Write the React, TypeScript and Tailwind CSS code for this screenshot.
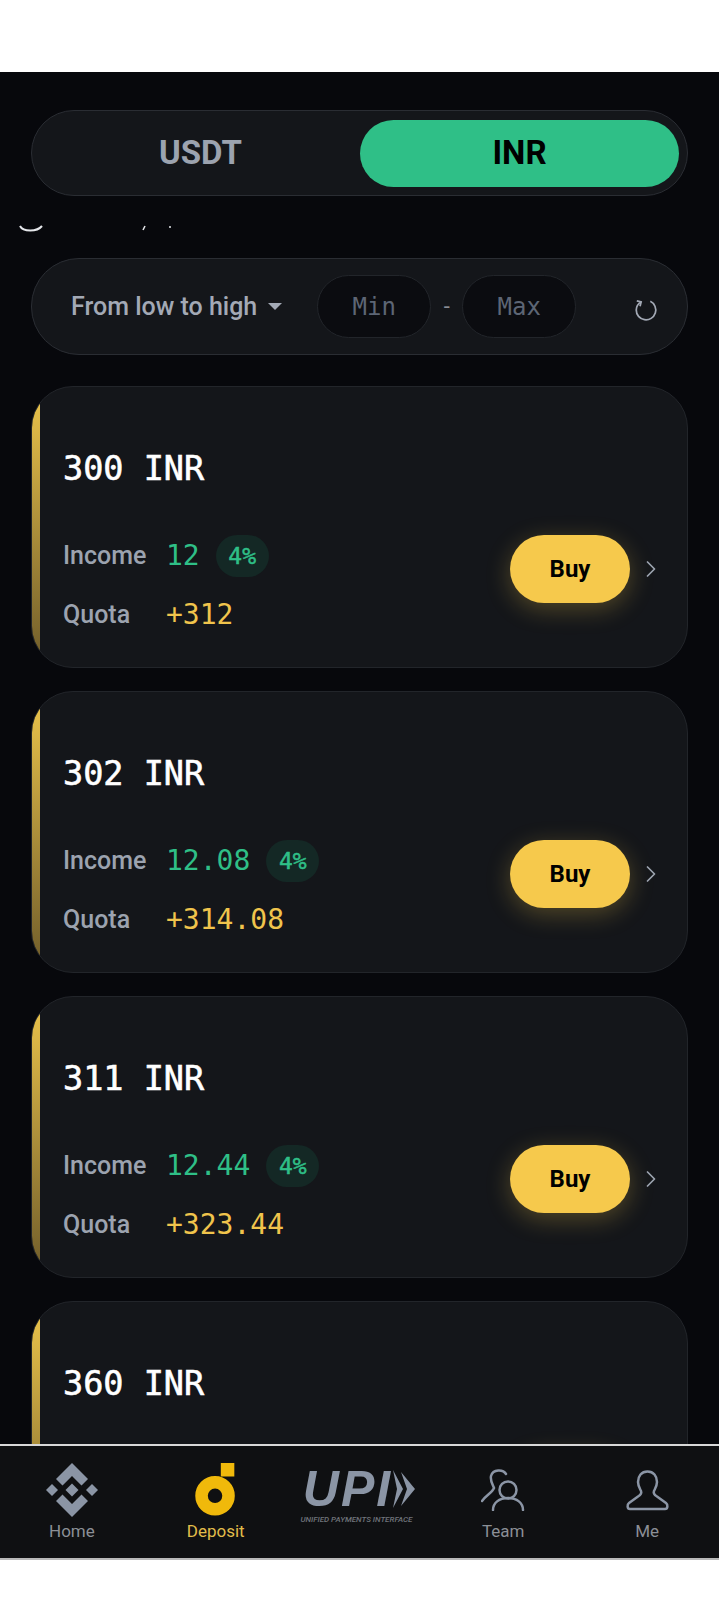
import { ChevronRight } from "lucide-react";

const sans = "font-['Roboto','Liberation_Sans',sans-serif]";
const mono = "font-['DejaVu_Sans_Mono','Liberation_Mono',monospace]";

const offers = [
  { amount: "300", income: "12", quota: "+312" },
  { amount: "302", income: "12.08", quota: "+314.08" },
  { amount: "311", income: "12.44", quota: "+323.44" },
  { amount: "360", income: "14.4", quota: "+374.4" },
];

function OfferCard({ amount, income, quota }: { amount: string; income: string; quota: string }) {
  return (
    <div className="relative h-[282px] shrink-0 overflow-hidden rounded-[42px] border border-[#22252a] bg-[#14161a] pl-[31px] pr-[22px]">
      <div className="absolute bottom-0 left-0 top-0 w-2 bg-gradient-to-b from-[#eec64b] to-[#6f5c2a]" />
      <div className={`${mono} mt-[57px] text-[33.500px] leading-[50px] text-white [-webkit-text-stroke:0.6px_white]`}>{amount} INR</div>
      <div className="mt-[40px] flex items-center justify-between">
        <div>
          <div className="flex h-[44px] items-center">
            <span className={`${sans} w-[103px] text-[25px] font-medium text-[#9ca3af]`}>Income</span>
            <span className={`${mono} text-[28px] text-[#2fbf87]`}>{income}</span>
            <span className={`${mono} ml-4 flex h-[42px] w-[53px] items-center justify-center rounded-full bg-[#142825] text-[23px] text-[#2fbf87] [-webkit-text-stroke:0.5px_#2fbf87]`}>4%</span>
          </div>
          <div className="mt-[15px] flex h-[44px] items-center">
            <span className={`${sans} w-[103px] text-[25px] font-medium text-[#9ca3af]`}>Quota</span>
            <span className={`${mono} text-[28px] text-[#f0c44c]`}>{quota}</span>
          </div>
        </div>
        <div className="mb-[33px] flex items-center gap-[7px]">
          <button className={`${sans} flex h-[68px] w-[120px] items-center justify-center rounded-[34px] bg-[#f6c94c] text-[24px] font-bold text-black shadow-[0_6px_24px_rgba(246,201,76,0.28)]`}>Buy</button>
          <ChevronRight className="h-7 w-7 text-[#9ca3af]" strokeWidth={1.500} />
        </div>
      </div>
    </div>
  );
}

function NavItem({ label, active, children }: { label: string; active?: boolean; children: React.ReactNode }) {
  return (
    <div className="flex w-[144px] flex-col items-center">
      <div className="flex h-[58px] items-center justify-center">{children}</div>
      <span className={`${sans} mt-[1px] text-[17px] leading-[22px] ${active ? "text-[#e2bd4a]" : "text-[#8b8f96]"}`}>{label}</span>
    </div>
  );
}

export default function App() {
  return (
    <div className={`${sans} h-[1600px] w-[719px] overflow-hidden bg-white`}>
      <div className="h-[72px]" />
      <div className="flex h-[1488px] flex-col border-b-2 border-[#b9b9b9] bg-[#07080c]">
        <div className="relative min-h-0 flex-1 overflow-hidden px-[31px]">
          <div className="mt-[38px] flex h-[86px] items-center rounded-[43px] border border-[#2a2d33] bg-[#14161a] pl-[9px] pr-[8px]">
            <div className="flex h-[67px] flex-1 items-center justify-center text-[33px] font-bold text-[#9ca3af]">USDT</div>
            <div className="flex h-[67px] w-[319px] items-center justify-center rounded-[34px] bg-[#2fbf87] text-[33px] font-bold text-black">INR</div>
          </div>

          <div className="mt-[62px] flex h-[97px] items-center rounded-[48px] border border-[#2a2d33] bg-[#14161a] pl-[39px]">
            <span className="text-[25px] font-medium text-[#a3a9b5]">From low to high</span>
            <span className="ml-[11px] h-0 w-0 border-x-[7px] border-t-[7px] border-x-transparent border-t-[#a3a9b5]" />
            <div className="ml-[35px] flex items-center">
              <div className={`${mono} flex h-[63px] w-[114px] items-center justify-center rounded-[32px] border border-[#22252a] bg-[#0b0c10] text-[24px] text-[#5d6675]`}>Min</div>
              <span className="w-[31px] text-center text-[22px] text-[#8b8f96]">-</span>
              <div className={`${mono} flex h-[63px] w-[114px] items-center justify-center rounded-[32px] border border-[#22252a] bg-[#0b0c10] text-[24px] text-[#5d6675]`}>Max</div>
            </div>
            <svg viewBox="0 0 24 24" className="ml-[57px] mt-[6px] h-[26px] w-[26px]" fill="none" stroke="#a3a9b5" strokeWidth="1.600">
              <path d="M7.500 4.500C4.600 6.200 3 8.900 3 12a9 9 0 1 0 13-8" />
              <path d="M3.500 3.500l4 1-1 4" />
            </svg>
          </div>

          <div className="mt-[31px] flex flex-col gap-[23px]">
            {offers.map((o) => (
              <OfferCard key={o.amount} {...o} />
            ))}
          </div>

          {/* bottom edge of the notice line that has scrolled under the toggle */}
          <svg viewBox="0 0 160 8" className="absolute left-[19px] top-[153px] h-2 w-[160px]" fill="none" stroke="#e5e7eb" strokeWidth="2">
            <path d="M1 1c3 6 17 6 22 0" />
            <path d="M126 1l-2 4" strokeWidth="1.500" />
            <path d="M151 1v2" strokeWidth="1.500" />
          </svg>
        </div>

        <div className="flex h-[114px] shrink-0 items-start justify-between border-t-2 border-[#d8d8d8] bg-[#0f1012] pt-[15px]">
          <NavItem label="Home">
            <svg viewBox="0 0 54 54" className="h-[54px] w-[54px]" fill="#8b95a5">
              <path d="M27 0l16 16-6.500 6.500L27 13l-9.500 9.500L11 16z" />
              <path d="M27 54L11 38l6.500-6.500L27 41l9.500-9.500L43 38z" />
              <path d="M27 20.500l6.500 6.500-6.500 6.500-6.500-6.500z" />
              <path d="M7 21l6 6-6 6-6-6z" />
              <path d="M47 21l6 6-6 6-6-6z" />
            </svg>
          </NavItem>
          <NavItem label="Deposit" active>
            <svg viewBox="0 0 44 56" className="h-[54px] w-[44px]" fill="none">
              <rect x="27" y="0" width="14" height="14" fill="#f0b90b" />
              <circle cx="21" cy="34" r="14" stroke="#f0b90b" strokeWidth="13" />
            </svg>
          </NavItem>
          <div className="flex w-[144px] flex-col items-center pt-[6px]">
            <div className="flex h-[44px] items-center">
              <span className="font-['Liberation_Sans',sans-serif] text-[50px] font-bold italic leading-[44px] tracking-[2px] text-[#8b95a5]">UPI</span>
              <svg viewBox="0 0 24 40" className="h-10 w-6" fill="#8b95a5">
                <path d="M1 1l10 19-10 19 4-19z" />
                <path d="M9 3l14 17-14 17 6-17z" />
              </svg>
            </div>
            <span className="mt-[4px] -translate-x-[3px] whitespace-nowrap text-[8px] font-medium italic leading-[10px] text-[#70747b]">UNIFIED PAYMENTS INTERFACE</span>
          </div>
          <NavItem label="Team">
            <svg viewBox="0 0 44 42" className="h-[42px] w-[44px]" fill="none" stroke="#8b95a5" strokeWidth="2.500" strokeLinecap="round">
              <path d="M25 5C22 0 12 0 10 7c-1 5 2 9 3 12-2 5-8 7-12 13" />
              <circle cx="27" cy="21" r="8.500" />
              <path d="M12 41c0-7 6-12 15-12s15 5 15 12" />
            </svg>
          </NavItem>
          <NavItem label="Me">
            <svg viewBox="0 0 43 41" className="h-[41px] w-[43px]" fill="none" stroke="#8b95a5" strokeWidth="2.500" strokeLinejoin="round">
              <path d="M21.500 1.500c-6 0-9.500 4.500-9.500 10.500 0 4 2 7 3 9 1 2.500-.5 4-3 5.500L3 33c-2 1.500-2 6 1 6h35c3 0 3-4.500 1-6l-9-6.500c-2.500-1.500-4-3-3-5.500 1-2 3-5 3-9 0-6-3.500-10.500-9.500-10.500z" />
            </svg>
          </NavItem>
        </div>
      </div>
    </div>
  );
}
